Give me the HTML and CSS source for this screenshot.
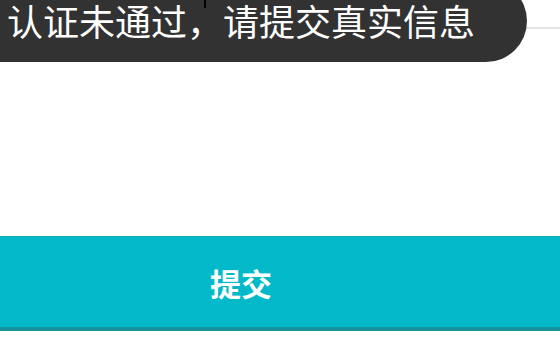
FILE: index.html
```html
<!DOCTYPE html>
<html lang="zh-CN">
<head>
    <meta charset="UTF-8">
    <meta name="viewport" content="width=device-width, initial-scale=1.0">
    <link rel="stylesheet" href="styles.css">
    <title>认证</title>
</head>
<body>

    <div class="form">
        <div class="field"></div>
        <button class="submit">提交</button>
    </div>

    <div class="toast">
        <div class="toast-text">认证未通过，请提交真实信息</div>
    </div>
    <div class="caret"></div>

</body>
</html>
```

FILE: styles.css
```css
body {
    margin: 0;
    background-color: #ffffff;
    font-family: "Noto Sans CJK SC", "Noto Sans", sans-serif;
}

.form {
    display: flex;
    flex-direction: column;
}

.field {
    height: 27px;
    border-bottom: 2px solid #e4e4e4;
}

.submit {
    margin-top: 207px;
    height: 95px;
    border: none;
    border-top: 1px solid #12a9b6;
    border-bottom: 4px solid #17939e;
    background-color: #02b9c9;
    color: #ffffff;
    font-family: inherit;
    font-size: 31px;
    font-weight: bold;
    padding: 0 78px 0 0;
    box-shadow: 0 2px 2px rgba(0, 200, 230, 0.08);
}

.toast {
    position: absolute;
    top: -20px;
    left: -40px;
    width: 567px;
    height: 82px;
    border-radius: 41px;
    background-color: #323232;
    box-sizing: border-box;
    padding: 21px 0 0 47px;
}

.toast-text {
    color: #ffffff;
    font-size: 36px;
    line-height: 38px;
    white-space: nowrap;
}

.caret {
    position: absolute;
    top: 0;
    left: 204px;
    width: 2px;
    height: 8px;
    background-color: #000000;
}
```
